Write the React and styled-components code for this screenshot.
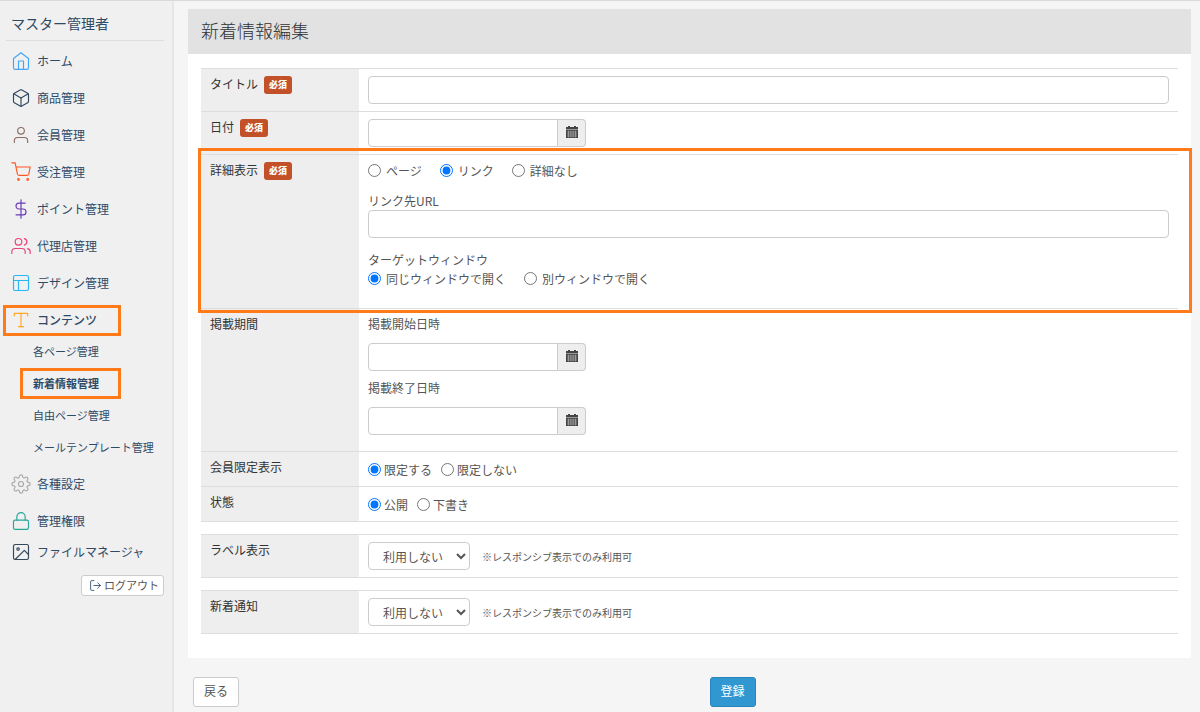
import { useState } from "react";
import styled, { createGlobalStyle } from "styled-components";
import {
  FiHome,
  FiBox,
  FiUser,
  FiShoppingCart,
  FiDollarSign,
  FiUsers,
  FiLayout,
  FiType,
  FiSettings,
  FiLock,
  FiImage,
  FiLogOut,
} from "react-icons/fi";

const GlobalStyle = createGlobalStyle`
  * {
    box-sizing: border-box;
  }
  body {
    margin: 0;
    background: #f5f5f5;
    color: #555;
    font-family: "Noto Sans CJK JP", sans-serif;
    font-weight: 400;
    font-size: 12px;
    line-height: 17px;
  }
  input, select, button {
    font-family: inherit;
    font-weight: inherit;
    color: inherit;
  }
`;

const Page = styled.div`
  display: flex;
  min-height: 100vh;
  border-top: 1px solid #dadada;
`;

const Sidebar = styled.nav`
  flex: 0 0 174px;
  padding: 5px 8px 20px 3px;
  background: #f0f0f0;
  border-right: 2px solid #e6e6e6;
  color: #2f4a66;
`;

const SidebarTitle = styled.div`
  margin: 0 0 5px 3px;
  padding: 0 6px 0 5px;
  font-size: 14px;
  line-height: 34px;
  border-bottom: 1px solid #dedede;
`;

const Menu = styled.ul`
  list-style: none;
  margin: 0;
  padding: 0;
`;

const MenuItem = styled.li`
  margin-bottom: ${(props) => (props.$tight ? "0" : "6px")};
`;

const MenuLink = styled.a`
  display: flex;
  align-items: center;
  gap: 6px;
  width: 118px;
  height: 31px;
  padding: 0 0 2px ${(props) => (props.$active ? "5px" : "8px")};
  border: ${(props) => (props.$active ? "3px solid #ff7b1a" : "none")};
  color: inherit;
  font-size: 12px;
  font-weight: ${(props) => (props.$active ? 500 : 400)};
  text-decoration: none;
  white-space: nowrap;
  svg {
    flex: none;
    width: 20px;
    height: 20px;
    stroke-width: 1.4;
    color: ${(props) => props.$color};
  }
`;

const SubMenu = styled.ul`
  display: flex;
  flex-direction: column;
  gap: 1px;
  list-style: none;
  margin: 0;
  padding: 0 0 0 17px;
`;

const SubLink = styled.a`
  display: flex;
  align-items: center;
  width: 101px;
  height: 31px;
  padding: 0 0 1px ${(props) => (props.$active ? "10px" : "13px")};
  border: ${(props) => (props.$active ? "3px solid #ff7b1a" : "none")};
  color: inherit;
  font-size: 11px;
  font-weight: ${(props) => (props.$active ? 700 : 400)};
  text-decoration: none;
  white-space: nowrap;
`;

const Logout = styled.button`
  display: flex;
  align-items: center;
  gap: 2px;
  height: 21px;
  margin: 7px 0 0 auto;
  padding: 0 4px 0 7px;
  border: 1px solid #ccc;
  border-radius: 3px;
  background: #fff;
  color: #555;
  font-size: 11px;
  line-height: 17px;
  cursor: pointer;
  svg {
    width: 13px;
    height: 13px;
    stroke-width: 1.6;
    color: #2c4a6b;
  }
`;

const Main = styled.main`
  flex: 1;
  min-width: 0;
  padding: 8px 9px 4px 14px;
`;

const Panel = styled.section`
  background: #fff;
`;

const PanelTitle = styled.h1`
  margin: 0;
  padding: 0 13px 3px;
  background: #e2e2e2;
  color: #333;
  font-size: 18px;
  font-weight: 300;
  line-height: 42px;
`;

const PanelBody = styled.div`
  display: flex;
  flex-direction: column;
  gap: 12px;
  padding: 14px 13px 24px;
`;

const Rows = styled.div`
  border-bottom: 1px solid #ddd;
`;

const Row = styled.div`
  position: relative;
  display: grid;
  grid-template-columns: 158px 1fr;
  border-top: 1px solid #ddd;
`;

/* frame drawn over the row and its neighbours */
const RowFrame = styled.div`
  position: absolute;
  z-index: 1;
  inset: -7px -14px -5px -3px;
  border: 3px solid #ff7b1a;
  pointer-events: none;
`;

const RowHead = styled.div`
  display: flex;
  align-items: flex-start;
  gap: 6px;
  padding: 6px 9px 8px;
  background: #eee;
  color: #333;
`;

const Badge = styled.span`
  margin-top: 1px;
  padding: 0 5px;
  border-radius: 3px;
  background: #c25028;
  color: #fff;
  font-size: 9px;
  font-weight: 900;
  line-height: 18px;
`;

const RowBody = styled.div`
  min-width: 0;
  padding: 7px 9px;
`;

const TextInput = styled.input`
  display: block;
  width: 100%;
  height: 28px;
  padding: 4px 10px;
  border: 1px solid #ccc;
  border-radius: 4px;
  background: #fff;
  font-size: 12px;
`;

const DateGroup = styled.div`
  display: flex;
  width: 218px;
  ${TextInput} {
    flex: 1;
    min-width: 0;
    border-radius: 4px 0 0 4px;
  }
`;

const DateButton = styled.button`
  display: flex;
  align-items: center;
  justify-content: center;
  width: 28px;
  height: 28px;
  padding: 0 0 2px;
  border: 1px solid #ccc;
  border-left: none;
  border-radius: 0 4px 4px 0;
  background: #eee;
  color: #444;
  cursor: pointer;
`;

const FieldLabel = styled.label`
  display: block;
  line-height: 15px;
`;

const Period = styled.div`
  margin-bottom: 9px;
  ${FieldLabel} {
    margin-bottom: 12px;
  }
`;

const LinkField = styled.div`
  margin: 14px 0 13px;
  ${FieldLabel} {
    margin-bottom: 2px;
  }
`;

const TargetField = styled.div`
  display: flex;
  flex-direction: column;
  gap: 2px;
  margin-bottom: 14px;
`;

const RadioLine = styled.div`
  display: flex;
  align-items: center;
  gap: ${(props) => (props.$compact ? "9px" : "18px")};
  min-height: ${(props) => (props.$compact ? "20px" : "17px")};
`;

const RadioLabel = styled.label`
  display: flex;
  align-items: center;
  gap: ${(props) => (props.$compact ? "3px" : "5px")};
  input {
    width: 13px;
    height: 13px;
    margin: 0;
  }
`;

const SelectLine = styled.div`
  display: flex;
  align-items: center;
  gap: 12px;
`;

const SelectBox = styled.select`
  width: 102px;
  height: 28px;
  padding: 0 2px 0 10px;
  border: 1px solid #ccc;
  border-radius: 4px;
  background: #fff;
  font-size: 12px;
`;

const Note = styled.span`
  font-size: 10px;
`;

const Actions = styled.div`
  display: grid;
  grid-template-columns: 1fr 1fr;
  gap: 40px;
  padding: 19px 5px 0;
`;

const Button = styled.button`
  justify-self: start;
  height: 30px;
  padding: 0 10px 3px;
  border: 1px solid ${(props) => (props.$primary ? "#2a84bd" : "#ccc")};
  border-radius: 3px;
  background: ${(props) => (props.$primary ? "#3097d1" : "#fff")};
  color: ${(props) => (props.$primary ? "#fff" : "#555")};
  font-size: 12px;
  cursor: pointer;
`;

const MENU = [
  { label: "ホーム", icon: FiHome, color: "#42a5f5" },
  { label: "商品管理", icon: FiBox, color: "#34495e" },
  { label: "会員管理", icon: FiUser, color: "#8d6e63" },
  { label: "受注管理", icon: FiShoppingCart, color: "#ff5722" },
  { label: "ポイント管理", icon: FiDollarSign, color: "#673ab7" },
  { label: "代理店管理", icon: FiUsers, color: "#ec407a" },
  { label: "デザイン管理", icon: FiLayout, color: "#29b6f6" },
  {
    label: "コンテンツ",
    icon: FiType,
    color: "#ffa726",
    active: true,
    children: [
      { label: "各ページ管理" },
      { label: "新着情報管理", active: true },
      { label: "自由ページ管理" },
      { label: "メールテンプレート管理" },
    ],
  },
  { label: "各種設定", icon: FiSettings, color: "#aaa" },
  { label: "管理権限", icon: FiLock, color: "#26a69a", tight: true },
  { label: "ファイルマネージャ", icon: FiImage, color: "#34495e", tight: true },
];

const CalendarIcon = () => (
  <svg width="12" height="12" viewBox="0 0 12 12" aria-hidden="true">
    <path d="M0 1h2V0h2v1h4V0h2v1h2v2.5H0z" fill="currentColor" />
    <path d="M0 4h12v8H0z" fill="currentColor" />
    <path
      d="M1 6h10M1 8h10M1 10h10M2.5 4.5v7M4.9 4.5v7M7.2 4.5v7M9.5 4.5v7"
      stroke="#eee"
      strokeWidth="0.4"
    />
  </svg>
);

const DateField = ({ id }) => (
  <DateGroup>
    <TextInput id={id} type="text" />
    <DateButton type="button" aria-label="カレンダー">
      <CalendarIcon />
    </DateButton>
  </DateGroup>
);

const Radios = ({ name, options, compact }) => {
  const [value, setValue] = useState(options.find((o) => o.on).label);
  return (
    <RadioLine $compact={compact} role="radiogroup">
      {options.map((o) => (
        <RadioLabel key={o.label} $compact={compact}>
          <input
            type="radio"
            name={name}
            checked={value === o.label}
            onChange={() => setValue(o.label)}
          />
          {o.label}
        </RadioLabel>
      ))}
    </RadioLine>
  );
};

const FormRow = ({ label, htmlFor, required, framed, children }) => (
  <Row>
    <RowHead>
      {htmlFor ? <label htmlFor={htmlFor}>{label}</label> : <span>{label}</span>}
      {required && <Badge>必須</Badge>}
    </RowHead>
    <RowBody>{children}</RowBody>
    {framed && <RowFrame />}
  </Row>
);

const UseSelect = ({ id }) => (
  <SelectLine>
    <SelectBox id={id} defaultValue="off">
      <option value="off">利用しない</option>
      <option value="on">利用する</option>
    </SelectBox>
    <Note>※レスポンシブ表示でのみ利用可</Note>
  </SelectLine>
);

const SideNav = () => (
  <Sidebar>
    <SidebarTitle>マスター管理者</SidebarTitle>
    <Menu>
      {MENU.map(({ label, icon: Icon, color, active, tight, children }) => (
        <MenuItem key={label} $tight={tight}>
          <MenuLink href="#" $color={color} $active={active}>
            <Icon />
            {label}
          </MenuLink>
          {children && (
            <SubMenu>
              {children.map((c) => (
                <li key={c.label}>
                  <SubLink href="#" $active={c.active}>
                    {c.label}
                  </SubLink>
                </li>
              ))}
            </SubMenu>
          )}
        </MenuItem>
      ))}
    </Menu>
    <Logout type="button">
      <FiLogOut />
      ログアウト
    </Logout>
  </Sidebar>
);

const App = () => {
  return (
    <>
      <GlobalStyle />
      <Page>
        <SideNav />
        <Main>
          <Panel>
            <PanelTitle>新着情報編集</PanelTitle>
            <PanelBody>
              <Rows>
                <FormRow label="タイトル" htmlFor="title" required>
                  <TextInput id="title" type="text" />
                </FormRow>
                <FormRow label="日付" htmlFor="date" required>
                  <DateField id="date" />
                </FormRow>
                <FormRow label="詳細表示" required framed>
                  <Radios
                    name="detail"
                    options={[
                      { label: "ページ" },
                      { label: "リンク", on: true },
                      { label: "詳細なし" },
                    ]}
                  />
                  <LinkField>
                    <FieldLabel htmlFor="url">リンク先URL</FieldLabel>
                    <TextInput id="url" type="text" />
                  </LinkField>
                  <TargetField>
                    <span>ターゲットウィンドウ</span>
                    <Radios
                      name="target"
                      options={[
                        { label: "同じウィンドウで開く", on: true },
                        { label: "別ウィンドウで開く" },
                      ]}
                    />
                  </TargetField>
                </FormRow>
                <FormRow label="掲載期間">
                  <Period>
                    <FieldLabel htmlFor="start">掲載開始日時</FieldLabel>
                    <DateField id="start" />
                  </Period>
                  <Period>
                    <FieldLabel htmlFor="end">掲載終了日時</FieldLabel>
                    <DateField id="end" />
                  </Period>
                </FormRow>
                <FormRow label="会員限定表示">
                  <Radios
                    name="members"
                    compact
                    options={[{ label: "限定する", on: true }, { label: "限定しない" }]}
                  />
                </FormRow>
                <FormRow label="状態">
                  <Radios
                    name="status"
                    compact
                    options={[{ label: "公開", on: true }, { label: "下書き" }]}
                  />
                </FormRow>
              </Rows>
              <Rows>
                <FormRow label="ラベル表示" htmlFor="label-view">
                  <UseSelect id="label-view" />
                </FormRow>
              </Rows>
              <Rows>
                <FormRow label="新着通知" htmlFor="notice">
                  <UseSelect id="notice" />
                </FormRow>
              </Rows>
            </PanelBody>
          </Panel>
          <Actions>
            <Button type="button">戻る</Button>
            <Button type="submit" $primary>
              登録
            </Button>
          </Actions>
        </Main>
      </Page>
    </>
  );
};

export default App;
